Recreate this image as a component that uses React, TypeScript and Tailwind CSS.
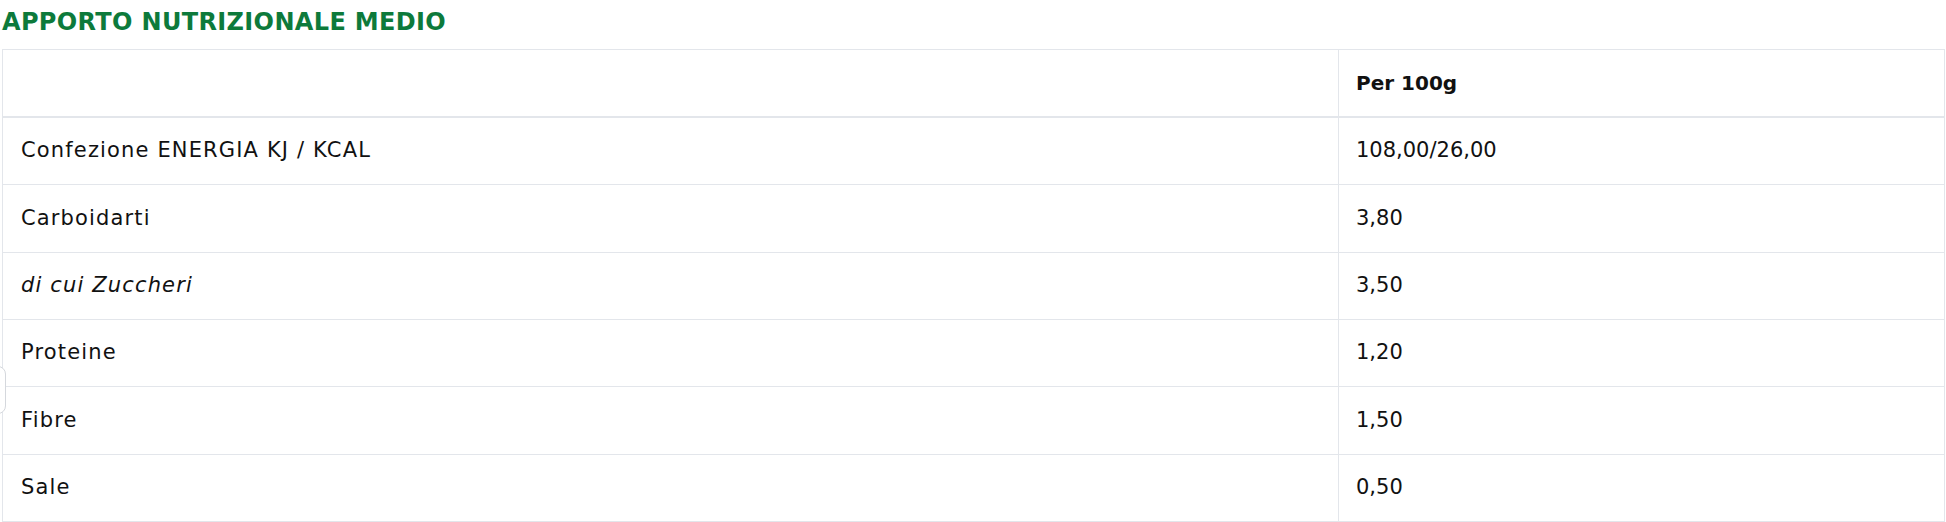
import React from "react";

const rows: { label: string; value: string; italic?: boolean }[] = [
  { label: "Confezione ENERGIA KJ / KCAL", value: "108,00/26,00" },
  { label: "Carboidarti", value: "3,80" },
  { label: "di cui Zuccheri", value: "3,50", italic: true },
  { label: "Proteine", value: "1,20" },
  { label: "Fibre", value: "1,50" },
  { label: "Sale", value: "0,50" },
];

export default function App() {
  return (
    <div
      className="relative w-[1946px] h-[522px] bg-white overflow-hidden pl-[2px] pr-[1px]"
      style={{ fontFamily: "'DejaVu Sans', 'Open Sans', sans-serif" }}
    >
      <h2 className="text-[24px] leading-[44px] font-bold text-[#0d7a3b] uppercase h-[49px] tracking-[0.35px]">
        Apporto nutrizionale medio
      </h2>
      <div className="border border-[#e3e6eb] border-b-0 text-[#111]">
        <div className="grid grid-cols-[1336px_1fr] h-[68px] border-b-2 border-[#e3e6eb]">
          <div className="border-r border-[#e3e6eb]" />
          <div className="flex items-center pl-[17px] font-bold text-[20px]">Per 100g</div>
        </div>
        {rows.map((r) => (
          <div
            key={r.label}
            className="grid grid-cols-[1336px_1fr] h-[67.33px] border-b border-[#e3e6eb] text-[21px]"
          >
            <div
              className={`flex items-center pl-[18px] border-r border-[#e3e6eb] tracking-[1.15px] ${
                r.italic ? "italic" : ""
              }`}
            >
              {r.label}
            </div>
            <div className="flex items-center pl-[17px]">{r.value}</div>
          </div>
        ))}
      </div>
      <div className="absolute left-[-10px] top-[366px] w-[16px] h-[48px] rounded-[8px] border border-[#d5d8dd] bg-white" />
    </div>
  );
}
